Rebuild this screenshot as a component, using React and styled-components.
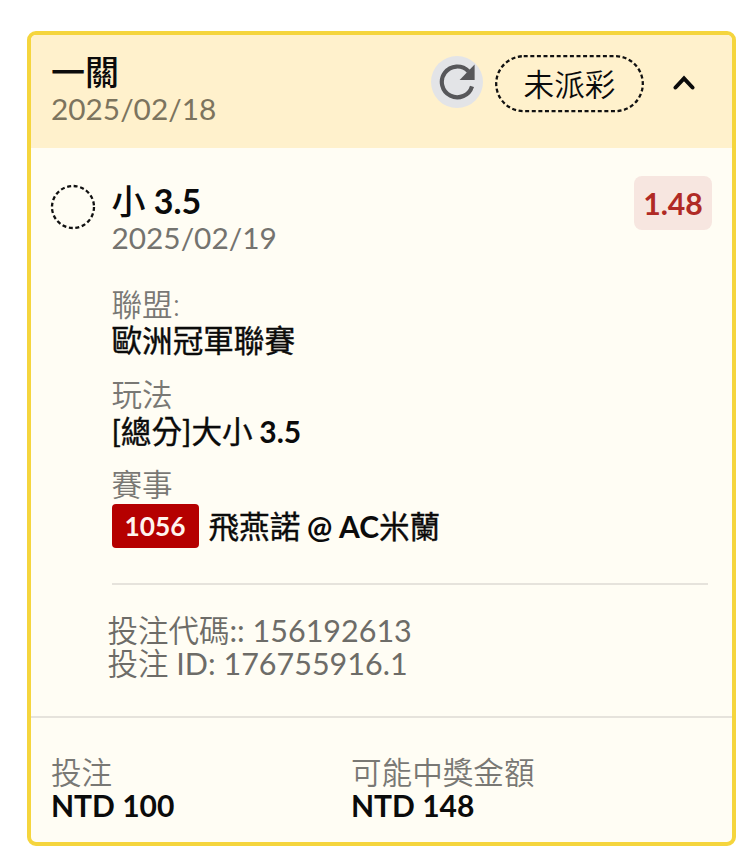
import React, { useState } from 'react';
import styled, { createGlobalStyle } from 'styled-components';

const GlobalStyle = createGlobalStyle`
  * {
    box-sizing: border-box;
  }

  body {
    margin: 0;
    background: #ffffff;
    font-family: Lato, 'Noto Sans CJK TC', sans-serif;
    font-size: 30.6px;
    color: #0b0b0b;
  }
`;

const Page = styled.main`
  height: 868px;
  padding: 31px 18px 22px 27px;
`;

const Card = styled.article`
  display: flex;
  flex-direction: column;
  height: 815px;
  border: 4.5px solid #f5d53d;
  border-radius: 9px;
  background: #fffdf4;
  overflow: hidden;
`;

const CardHeader = styled.header`
  display: flex;
  justify-content: space-between;
  height: 113px;
  flex: none;
  padding: 20px 37px 0 20px;
  background: #fff1cc;
`;

const Title = styled.h1`
  margin: -1px 0 0;
  font-size: 34px;
  font-weight: 500;
  line-height: 36px;
`;

const DateText = styled.div`
  font-size: 29.8px;
  line-height: 38px;
  color: ${({ $tone }) => $tone || '#74736f'};
`;

const HeaderActions = styled.div`
  display: flex;
  align-items: center;
  height: 58px;
`;

const RefreshButton = styled.button`
  display: flex;
  align-items: center;
  justify-content: center;
  width: 52px;
  height: 52px;
  margin: -4px 12px 0 0;
  padding: 0;
  border: none;
  border-radius: 50%;
  background: #e3e4e7;
`;

const StatusPill = styled.div`
  display: grid;
  width: 149px;
  height: 58px;
  margin-right: 29px;

  > * {
    grid-area: 1 / 1;
  }
`;

const StatusText = styled.div`
  font-weight: 350;
  line-height: 60px;
  text-align: center;
`;

const ToggleButton = styled.button`
  display: flex;
  margin-top: -3px;
  padding: 0;
  border: none;
  background: none;
`;

const Selection = styled.section`
  display: flex;
  flex: none;
  height: 570px;
  padding: 28px 20px 0 19px;
  border-bottom: 2px solid #e6e3dc;
`;

const StatusCircle = styled.div`
  flex: none;
  width: 46px;
  height: 46px;
  margin: 8px 16px 0 -0.5px;
`;

const Details = styled.div`
  flex: 1;
`;

const SelectionTop = styled.div`
  display: flex;
  justify-content: space-between;
  height: 111px;
`;

const SelectionName = styled.h2`
  margin: 6px 0 0;
  font-size: 34px;
  font-weight: 700;
  line-height: 37px;
`;

const Odds = styled.div`
  width: 78px;
  height: 54px;
  border-radius: 8px;
  background: #f7e6e0;
  color: #b02a25;
  font-size: 30.2px;
  font-weight: 700;
  line-height: 54px;
  text-align: center;
`;

const Field = styled.div`
  height: 90px;
`;

const Label = styled.div`
  font-weight: 350;
  line-height: 36px;
  color: #797874;
`;

const Value = styled.div`
  font-weight: 700;
  line-height: 36px;
  white-space: nowrap;
`;

const Cjk = styled.span`
  font-weight: ${({ $weight }) => $weight || 400};
  -webkit-text-stroke: ${({ $stroke }) => $stroke || 0}px currentColor;
`;

const Latin = styled.span`
  font-size: 30px;
  word-spacing: -0.6px;
`;

const MatchRow = styled.div`
  display: flex;
  align-items: center;
  gap: 10px;
  margin-top: 1px;
`;

const MatchCode = styled.span`
  width: 87px;
  height: 44px;
  border-radius: 4px;
  background: #b50000;
  color: #fff4ee;
  font-size: 26.3px;
  font-weight: 700;
  line-height: 45px;
  text-align: center;
`;

const Divider = styled.hr`
  height: 2px;
  margin: 35px 4px 0 0;
  border: none;
  background: #e6e3dc;
`;

const TicketInfo = styled.div`
  margin: 29px 0 0 -4px;
  font-size: 30.5px;
  line-height: 33px;
  color: #6d6c68;
`;

const Footer = styled.footer`
  display: grid;
  grid-template-columns: 300px 1fr;
  padding: 37px 20px 0;
`;

const Amount = styled.div`
  font-size: 30px;
  font-weight: 700;
  line-height: 28px;
`;

function RefreshIcon() {
  return (
    <svg width="36" height="36" viewBox="0 0 36 36" fill="none">
      <path d="M33 22.3A15.4 15.4 0 1 1 29.4 7.3" stroke="#57575a" strokeWidth="4.2" />
      <path d="M35.6 0.6V16H20.6Z" fill="#57575a" />
    </svg>
  );
}

function App() {
  const [open, setOpen] = useState(true);

  return (
    <>
      <GlobalStyle />
      <Page>
        <Card>
          <CardHeader>
            <div>
              <Title>一關</Title>
              <DateText $tone="#7c745e">2025/02/18</DateText>
            </div>
            <HeaderActions>
              <RefreshButton aria-label="refresh">
                <RefreshIcon />
              </RefreshButton>
              <StatusPill>
                <svg width="149" height="58" fill="none">
                  <rect x="1.2" y="1.2" width="146.6" height="55" rx="27.5" stroke="#111" strokeWidth="2.3" strokeDasharray="4 2.6" />
                </svg>
                <StatusText>未派彩</StatusText>
              </StatusPill>
              <ToggleButton aria-label="toggle" onClick={() => setOpen(!open)}>
                <svg width="22" height="16" viewBox="0 0 22 16" fill="none">
                  <path d="M2.5 12.5L11 3.5L19.5 12.5" stroke="#0b0b0b" strokeWidth="4" strokeLinecap="round" />
                </svg>
              </ToggleButton>
            </HeaderActions>
          </CardHeader>

          {open && (
            <Selection>
              <StatusCircle>
                <svg width="46" height="46" fill="none">
                  <circle cx="23" cy="23" r="21" stroke="#111" strokeWidth="2.3" strokeDasharray="4 2.6" />
                </svg>
              </StatusCircle>
              <Details>
                <SelectionTop>
                  <div>
                    <SelectionName><Cjk $weight={500}>小</Cjk> 3.5</SelectionName>
                    <DateText>2025/02/19</DateText>
                  </div>
                  <Odds>1.48</Odds>
                </SelectionTop>
                <Field>
                  <Label>聯盟:</Label>
                  <Value><Cjk $stroke={0.4}>歐洲冠軍聯賽</Cjk></Value>
                </Field>
                <Field>
                  <Label>玩法</Label>
                  <Value><Cjk $stroke={0.4}>[總分]大小</Cjk><Latin> 3.5</Latin></Value>
                </Field>
                <Label>賽事</Label>
                <MatchRow>
                  <MatchCode>1056</MatchCode>
                  <Value><Cjk $stroke={0.4}>飛燕諾</Cjk><Latin> @ AC</Latin><Cjk $stroke={0.4}>米蘭</Cjk></Value>
                </MatchRow>
                <Divider />
                <TicketInfo>
                  <div><Cjk $weight={350}>投注代碼</Cjk>:: 156192613</div>
                  <div><Cjk $weight={350}>投注</Cjk> ID: 176755916.1</div>
                </TicketInfo>
              </Details>
            </Selection>
          )}

          <Footer>
            <div>
              <Label>投注</Label>
              <Amount>NTD 100</Amount>
            </div>
            <div>
              <Label>可能中獎金額</Label>
              <Amount>NTD 148</Amount>
            </div>
          </Footer>
        </Card>
      </Page>
    </>
  );
}

export default App;
